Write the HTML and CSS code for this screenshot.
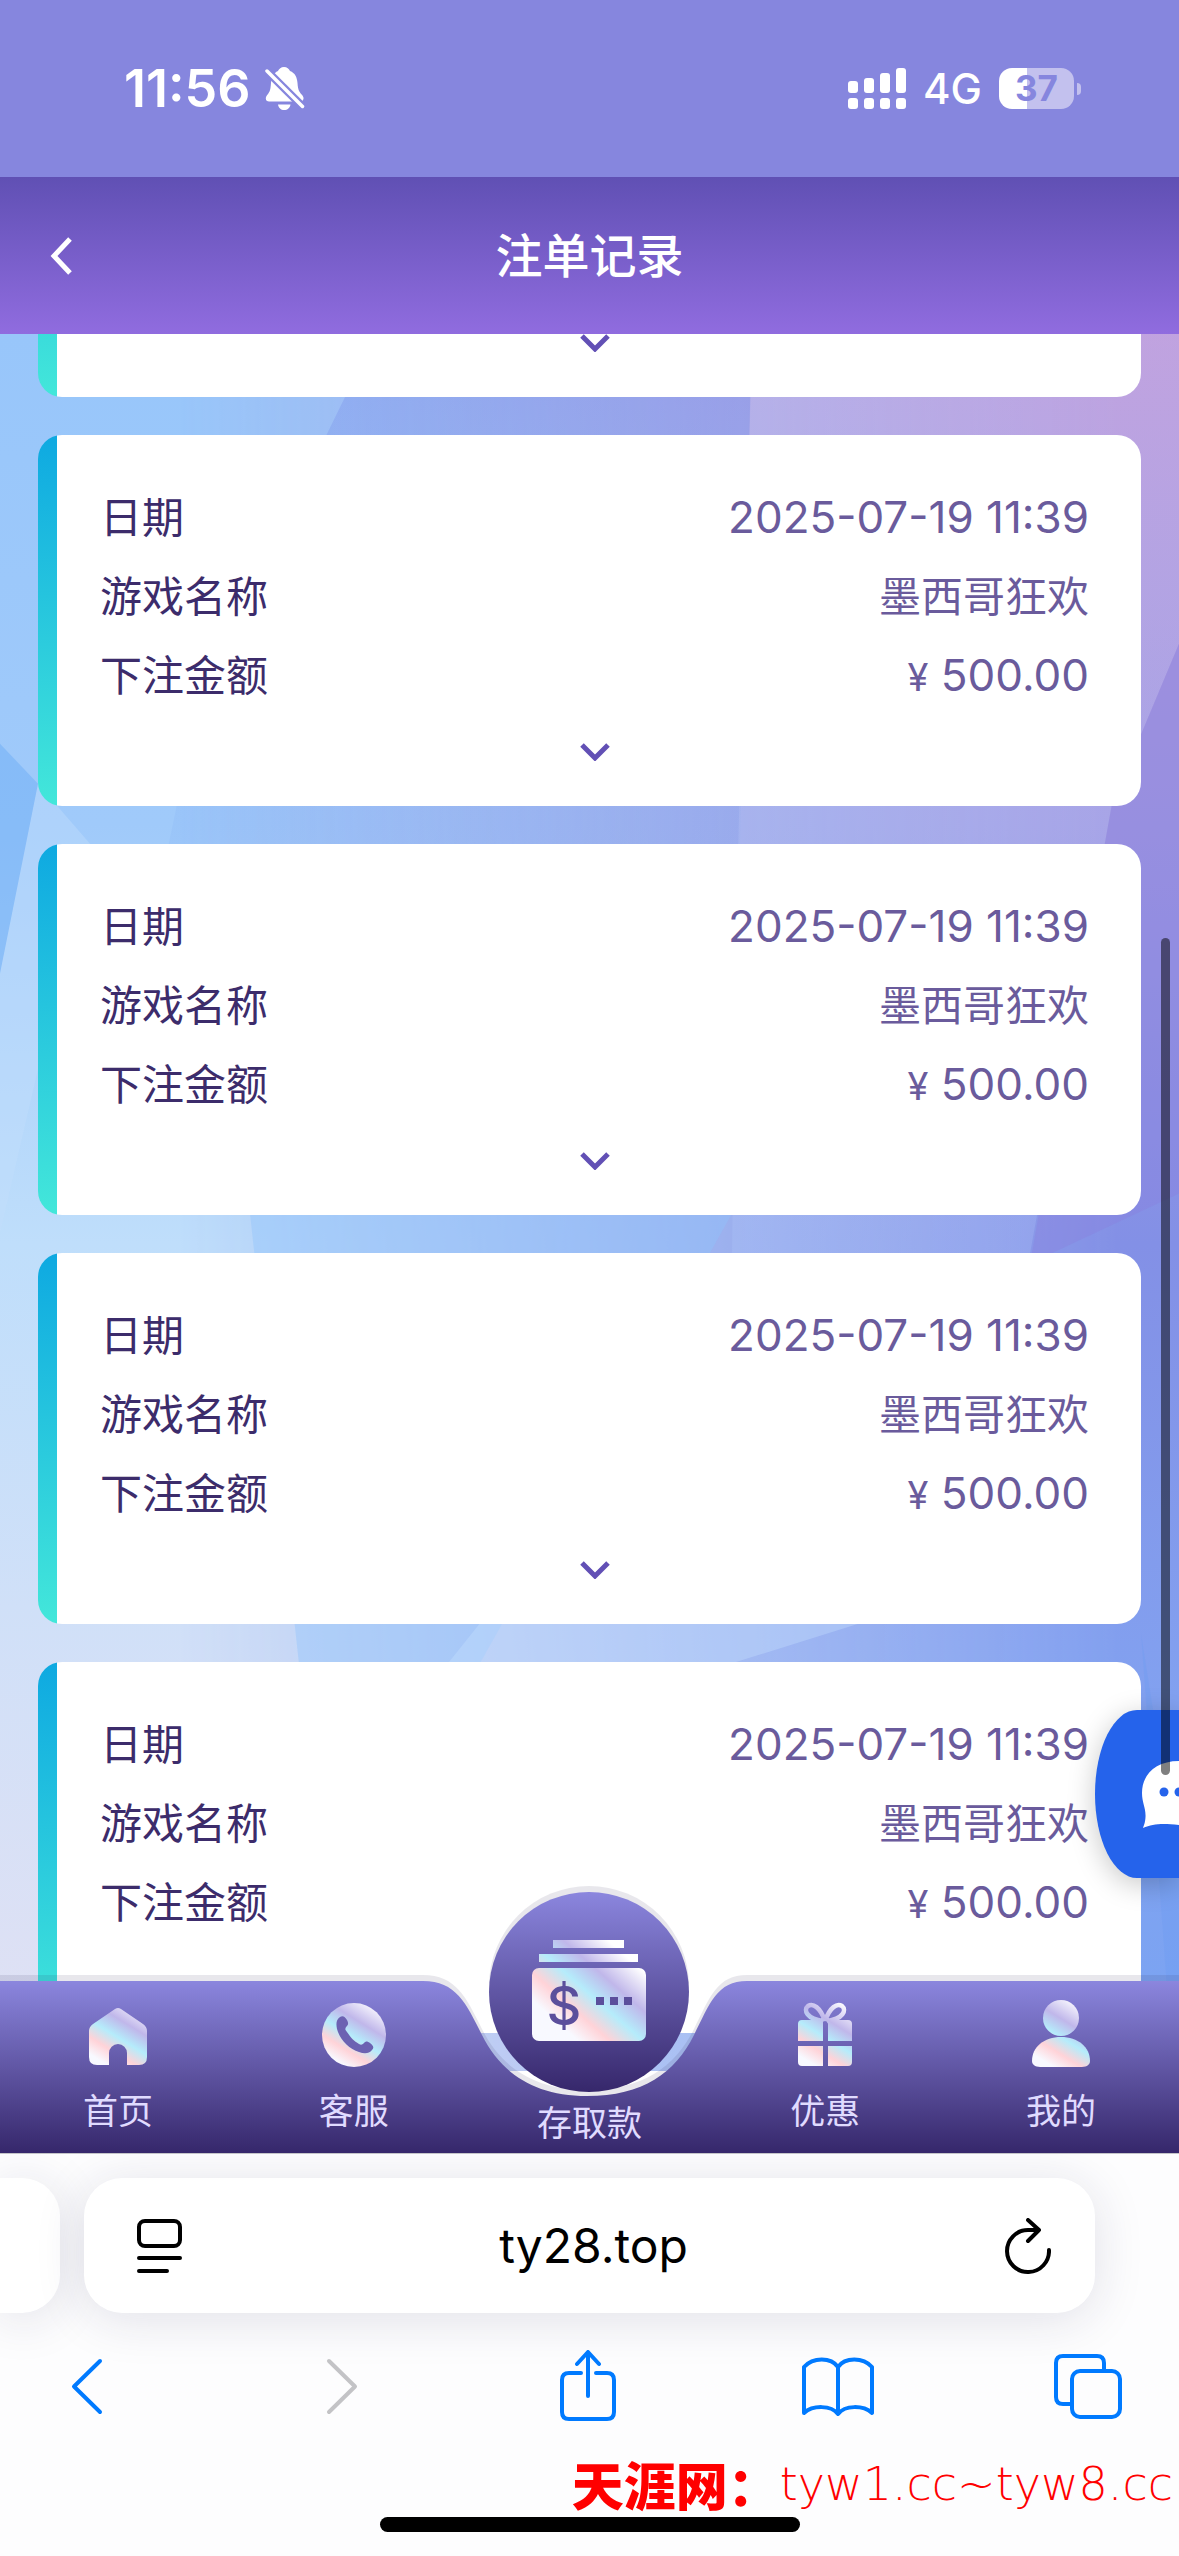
FILE: index.html
```html
<!DOCTYPE html>
<html lang="zh-CN">
<head>
<meta charset="utf-8">
<meta name="viewport" content="width=device-width, initial-scale=1">
<title>注单记录</title>
<link rel="stylesheet" href="styles.css">
</head>
<body>
<div class="status">
  <div class="status-group">
    <span class="clock">11:56</span>
    <svg class="bell" viewBox="0 0 40 44" aria-hidden="true">
      <path d="M19 0c3 0 5 2 6 4 5 2 7 6 7.500 12 .5 8 2 9 5 12.500 1 1.500 1.500 3 .5 4.500-.5 1-1.500 1.500-3 1.500H4c-3 0-4-3-2.500-5.500C4 25.500 5.500 24.500 6 16 6.500 10 8.500 6 13 4c1-2 3-4 6-4z" fill="#fff"/>
      <path d="M13 37.500h12.500c-.5 3.500-3 5.500-6.300 5.500s-5.700-2-6.200-5.500z" fill="#fff"/>
      <path d="M2 4L37.500 39.500" stroke="#8686de" stroke-width="8"/>
      <path d="M2 4L37.500 39.500" stroke="#fff" stroke-width="3.500" stroke-linecap="round"/>
    </svg>
  </div>
  <div class="status-group">
    <svg class="signal" viewBox="0 0 58 41" fill="#fff" aria-hidden="true">
      <rect y="13" width="10" height="12" rx="3"/><rect x="16" y="10" width="10" height="15" rx="3"/><rect x="32" y="5" width="10" height="20" rx="3"/><rect x="48" width="10" height="25" rx="3"/>
      <rect y="30" width="10" height="11" rx="3"/><rect x="16" y="30" width="10" height="11" rx="3"/><rect x="32" y="30" width="10" height="11" rx="3"/><rect x="48" y="30" width="10" height="11" rx="3"/>
    </svg>
    <span class="network">4G</span>
    <span class="battery"><span class="battery-body">37</span><span class="battery-tip"></span></span>
  </div>
</div>

<header class="header">
  <button class="back" type="button" aria-label="返回">
    <svg viewBox="0 0 22 38" fill="none" stroke="#fff" stroke-width="5"><path d="M20 2L4 19l16 17"/></svg>
  </button>
  <h1 class="title">注单记录</h1>
</header>

<main class="screen">
  <svg class="backdrop" viewBox="0 0 1179 1820" preserveAspectRatio="none" aria-hidden="true">
    <defs>
      <linearGradient id="bgLeft" x1="0" y1="0" x2="0" y2="1">
        <stop offset="0" stop-color="#98c6fa"/><stop offset=".27" stop-color="#a0cafa"/><stop offset=".5" stop-color="#bfdefb"/><stop offset=".7" stop-color="#d0e0f8"/><stop offset="1" stop-color="#e4e1f3"/>
      </linearGradient>
      <linearGradient id="bgRight" x1="0" y1="0" x2="0" y2="1">
        <stop offset="0" stop-color="#b698dc"/><stop offset=".27" stop-color="#9f98e2"/><stop offset=".5" stop-color="#8390e6"/><stop offset=".75" stop-color="#82a1f0"/><stop offset="1" stop-color="#78a5f3"/>
      </linearGradient>
      <linearGradient id="fade"><stop offset=".15" stop-color="#000"/><stop offset=".95" stop-color="#fff"/></linearGradient>
      <mask id="fadeMask"><rect width="1179" height="1820" fill="url(#fade)"/></mask>
      <linearGradient id="shade" x1="0" y1="0" x2="0" y2="1"><stop offset="0" stop-color="#6f7fe6" stop-opacity=".3"/><stop offset=".8" stop-color="#6f9ff0" stop-opacity=".12"/></linearGradient>
      <linearGradient id="tint" x1="0" y1="0" x2="0" y2="1"><stop offset="0" stop-color="#dfc3ea" stop-opacity=".25"/><stop offset=".5" stop-color="#c0c8f5" stop-opacity=".25"/><stop offset="1" stop-color="#b0c8fa" stop-opacity=".25"/></linearGradient>
    </defs>
    <rect width="1179" height="1820" fill="url(#bgLeft)"/>
    <rect width="1179" height="1820" fill="url(#bgRight)" mask="url(#fadeMask)"/>
    <path d="M345 63L200 360L150 600H738L752 0H420z" fill="url(#shade)"/>
    <path d="M752 0L738 520L732 920L1030 920L1112 470L1179 310V0z" fill="url(#tint)"/>
    <path d="M1179 310L1112 470L1030 930L1179 860z" fill="#8a7fdc" opacity=".35"/>
    <path d="M0 410L38 450L0 640z" fill="#6eadf6" opacity=".5"/>
    <path d="M38 450L90 510L0 900V640z" fill="#c4dffc" opacity=".4"/>
    <path d="M250 880L732 880L480 1330L300 1340z" fill="#8fc2fc" opacity=".4"/>
    <path d="M480 1290H860L700 1340H440z" fill="#c8e2ff" opacity=".35"/>
    <path d="M1141 1300L1179 1820V1540z" fill="#699bf2" opacity=".3"/>
  </svg>

  <section class="list">
    <article class="card card-tail">
      <button class="expand" type="button" aria-label="展开"><svg viewBox="0 0 30 18"><path d="M2 2L15 15L28 2"/></svg></button>
    </article>
    <article class="card">
      <dl class="rows">
        <div class="row"><dt>日期</dt><dd class="figure">2025-07-19 11:39</dd></div>
        <div class="row"><dt>游戏名称</dt><dd>墨西哥狂欢</dd></div>
        <div class="row"><dt>下注金额</dt><dd class="figure"><span class="yen">¥</span> 500.00</dd></div>
      </dl>
      <button class="expand" type="button" aria-label="展开"><svg viewBox="0 0 30 18"><path d="M2 2L15 15L28 2"/></svg></button>
    </article>
    <article class="card">
      <dl class="rows">
        <div class="row"><dt>日期</dt><dd class="figure">2025-07-19 11:39</dd></div>
        <div class="row"><dt>游戏名称</dt><dd>墨西哥狂欢</dd></div>
        <div class="row"><dt>下注金额</dt><dd class="figure"><span class="yen">¥</span> 500.00</dd></div>
      </dl>
      <button class="expand" type="button" aria-label="展开"><svg viewBox="0 0 30 18"><path d="M2 2L15 15L28 2"/></svg></button>
    </article>
    <article class="card">
      <dl class="rows">
        <div class="row"><dt>日期</dt><dd class="figure">2025-07-19 11:39</dd></div>
        <div class="row"><dt>游戏名称</dt><dd>墨西哥狂欢</dd></div>
        <div class="row"><dt>下注金额</dt><dd class="figure"><span class="yen">¥</span> 500.00</dd></div>
      </dl>
      <button class="expand" type="button" aria-label="展开"><svg viewBox="0 0 30 18"><path d="M2 2L15 15L28 2"/></svg></button>
    </article>
    <article class="card">
      <dl class="rows">
        <div class="row"><dt>日期</dt><dd class="figure">2025-07-19 11:39</dd></div>
        <div class="row"><dt>游戏名称</dt><dd>墨西哥狂欢</dd></div>
        <div class="row"><dt>下注金额</dt><dd class="figure"><span class="yen">¥</span> 500.00</dd></div>
      </dl>
      <button class="expand" type="button" aria-label="展开"><svg viewBox="0 0 30 18"><path d="M2 2L15 15L28 2"/></svg></button>
    </article>
    <article class="card card-head"></article>
  </section>

  <button class="chat" type="button" aria-label="在线客服">
    <svg viewBox="0 0 84 168" aria-hidden="true">
      <path d="M84 51C60 51 47 65 47 83c0 10 4 15 3.500 24-.3 5-1 7-2.500 11 10-4 18-5 36-3z" fill="#fff"/>
      <circle cx="69" cy="82" r="4.500" fill="#2563eb"/><circle cx="84" cy="82" r="4.500" fill="#2563eb"/>
    </svg>
  </button>

  <nav class="tabbar">
    <div class="tabbar-shape">
      <span class="tabbar-side"></span>
      <svg class="tabbar-notch" viewBox="0 0 361 172" aria-hidden="true">
        <defs><linearGradient id="bar" x1="0" y1="0" x2="0" y2="1"><stop offset="0" stop-color="#8b86de"/><stop offset="1" stop-color="#36276b"/></linearGradient></defs>
        <path d="M0 0H14C47 0 57 22 73 54C92 92 125 115 178 115C234 115 266 92 285 54C301 22 308 0 338 0H361V172H0z" fill="url(#bar)"/>
      </svg>
      <span class="tabbar-side"></span>
    </div>
    <a class="tab" href="#home">
      <svg class="tab-icon" viewBox="0 0 64 68" aria-hidden="true">
        <defs><linearGradient id="holo" gradientUnits="userSpaceOnUse" x1="12" y1="66" x2="50" y2="4"><stop offset=".08" stop-color="#f8f9ff"/><stop offset=".28" stop-color="#ffd3d8"/><stop offset=".48" stop-color="#b5ecfb"/><stop offset=".7" stop-color="#c0b7ea"/><stop offset="1" stop-color="#fbfaff"/></linearGradient></defs>
        <path d="M29 9q3-2 6 0l22 15q4 3 4 7v26q0 8-8 8H41V53a9 9 0 0 0-18 0v12H11q-8 0-8-8V31q0-4 4-7z" fill="url(#holo)"/>
      </svg>
      <span>首页</span>
    </a>
    <a class="tab" href="#service">
      <svg class="tab-icon" viewBox="0 0 64 68" aria-hidden="true">
        <circle cx="32" cy="35" r="32" fill="url(#holo)"/>
        <path d="M18 17c3-2 5 0 7 3 2 4 1 5-1 7-1 2-1 3 1 5 4 6 7 9 12 12 2 1 3 1 5-1 2-2 3-2 6 0 4 3 4 5 2 7-3 4-8 4-13 2C27 49 18 40 15 29c-1-5-1-9 3-12z" fill="#6c62b2"/>
      </svg>
      <span>客服</span>
    </a>
    <a class="tab tab-main" href="#cashier">
      <svg class="coin" viewBox="0 0 200 200" aria-hidden="true">
        <defs><linearGradient id="holoWide" gradientUnits="userSpaceOnUse" x1="64" y1="138" x2="136" y2="56"><stop offset=".08" stop-color="#f8f9ff"/><stop offset=".27" stop-color="#ffd3d8"/><stop offset=".47" stop-color="#b5ecfb"/><stop offset=".68" stop-color="#c0b7ea"/><stop offset=".95" stop-color="#fff"/></linearGradient></defs>
        <circle cx="100" cy="100" r="100" fill="url(#bar)"/>
        <path d="M64 48h71v8H64zM50 62h99v8H50z" fill="url(#holoWide)"/>
        <rect x="43" y="76" width="114" height="73" rx="7" fill="url(#holoWide)"/>
        <text class="coin-sign" x="75" y="133" text-anchor="middle">$</text>
        <path d="M107 105h8v8h-8zM121 105h8v8h-8zM135 105h8v8h-8z" fill="#5b4f9c"/>
      </svg>
      <span>存取款</span>
    </a>
    <a class="tab" href="#offers">
      <svg class="tab-icon" viewBox="0 0 64 68" aria-hidden="true">
        <path d="M32 21C27 7 20 3 15 6c-5 4-1 13 15 15M32 21C37 7 44 3 49 6c5 4 1 13-15 15" fill="none" stroke="url(#holo)" stroke-width="4.500"/>
        <path d="M9 20h21v21H5V24q0-4 4-4zM35 20h20q4 0 4 4v17H35zM5 46h25v20H9q-4 0-4-4zM35 46h24v16q0 4-4 4H35z" fill="url(#holo)"/>
      </svg>
      <span>优惠</span>
    </a>
    <a class="tab" href="#me">
      <svg class="tab-icon" viewBox="0 0 64 68" aria-hidden="true">
        <circle cx="32" cy="18" r="18" fill="url(#holo)"/>
        <path d="M32 37c17 0 29 10 29 24 0 5-5 6-10 6H13C8 67 3 66 3 61 3 47 15 37 32 37z" fill="url(#holo)"/>
      </svg>
      <span>我的</span>
    </a>
  </nav>
  <span class="scrollbar"></span>
</main>

<footer class="browser">
  <div class="tabs-strip">
    <div class="page-card page-card-prev"></div>
    <div class="page-card address">
      <button class="icon-button" type="button" aria-label="页面菜单">
        <svg class="glyph-small" viewBox="0 0 46 56" fill="none" stroke="#000" stroke-width="4" stroke-linecap="round"><rect x="3" y="3" width="41" height="25" rx="6"/><path d="M3 40h41M3 53h28"/></svg>
      </button>
      <span class="url">ty28.top</span>
      <button class="icon-button" type="button" aria-label="刷新">
        <svg class="glyph-small" viewBox="0 0 46 56" fill="none" stroke="#000" stroke-width="4" stroke-linecap="round" stroke-linejoin="round"><path d="M44 32A21 21 0 1 1 23 12H34M23 2l11 10-11 11"/></svg>
      </button>
    </div>
  </div>
  <div class="toolbar">
    <button class="tool" type="button" aria-label="后退"><svg viewBox="0 0 80 72"><path d="M53 11L27 36.500L53 62"/></svg></button>
    <button class="tool tool-off" type="button" aria-label="前进"><svg viewBox="0 0 80 72"><path d="M32 11L58 36.500L32 62"/></svg></button>
    <button class="tool" type="button" aria-label="分享"><svg viewBox="0 0 80 72"><path d="M33 23H21q-7 0-7 7v32q0 7 7 7h38q7 0 7-7V30q0-7-7-7H48M40 46V3M29 14L40 2l11 12"/></svg></button>
    <button class="tool" type="button" aria-label="书签"><svg viewBox="0 0 80 72"><path d="M40 17C33 7 15 7 6 17v46c9-8 27-8 34 1 7-9 25-9 34-1V17c-9-10-27-10-34 0zM40 17v46"/></svg></button>
    <button class="tool" type="button" aria-label="标签页"><svg viewBox="0 0 80 72"><path d="M22 54h-7q-7 0-7-7V13q0-7 7-7h34q7 0 7 7v7"/><rect x="24" y="21" width="48" height="46" rx="8"/></svg></button>
  </div>
  <p class="site-mark"><strong>天涯网：</strong>tyw1.cc~tyw8.cc</p>
  <span class="home-bar"></span>
</footer>
</body>
</html>
```

FILE: styles.css
```css
* {
  box-sizing: border-box;
}

body {
  margin: 0;
  min-height: 100vh;
  display: flex;
  flex-direction: column;
  background: #fdfdfe;
  font-family: Inter, "Noto Sans CJK SC", sans-serif;
}

button {
  padding: 0;
  border: 0;
  background: none;
}

svg {
  display: block;
}

/* Status bar */

.status {
  display: flex;
  justify-content: space-between;
  align-items: center;
  height: 177px;
  padding: 0 98px 0 124px;
  background: #8686de;
  color: #fff;
}

.status-group {
  display: flex;
  align-items: center;
  gap: 17px;
}

.status-group:first-child {
  gap: 14px;
}

.clock {
  font-size: 52px;
  line-height: 60px;
  font-weight: 600;
}

.bell {
  width: 40px;
  height: 44px;
}

.signal {
  width: 58px;
  height: 41px;
}

.network {
  font-size: 42px;
  line-height: 48px;
  font-weight: 500;
}

.battery {
  display: flex;
  align-items: center;
  gap: 3px;
}

.battery-body {
  width: 75px;
  height: 41px;
  border-radius: 13px;
  background: linear-gradient(to right, #fff 28px, #c3c1ee 28px);
  color: #8686de;
  font-size: 35px;
  line-height: 41px;
  font-weight: 700;
  text-align: center;
}

.battery-tip {
  width: 4px;
  height: 12px;
  border-radius: 0 4px 4px 0;
  background: #c3c1ee;
}

/* Page header */

.header {
  display: grid;
  grid-template-columns: 1fr auto 1fr;
  align-items: center;
  height: 157px;
  padding: 0 50px;
  background: linear-gradient(#6050b4, #906cdf);
}

.back svg {
  width: 22px;
  height: 38px;
}

.title {
  margin: 0;
  color: #fff;
  font-size: 47px;
  line-height: 60px;
  font-weight: 500;
}

/* Bet records */

.screen {
  position: relative;
  flex: 1;
  overflow: hidden;
}

.backdrop {
  position: absolute;
  inset: 0;
  width: 100%;
  height: 100%;
}

.list {
  position: relative;
  display: flex;
  flex-direction: column;
  gap: 38px;
  padding: 0 38px;
}

.card {
  display: flex;
  flex-direction: column;
  align-items: center;
  gap: 28px;
  padding: 43px 52px 45px 62px;
  border-radius: 24px;
  background: linear-gradient(#0ea9e1, #43e7da) 0 0 / 19px 100% no-repeat, #fff;
}

.card-tail {
  padding-top: 0;
  border-radius: 0 0 24px 24px;
  background: linear-gradient(#3adcdb, #43e7da) 0 0 / 19px 100% no-repeat, #fff;
}

.card-head {
  height: 82px;
  padding: 0;
  border-radius: 24px 24px 0 0;
}

.rows {
  width: 100%;
  margin: 0;
}

.row {
  display: flex;
  justify-content: space-between;
  height: 79px;
  font-size: 42px;
  line-height: 79px;
}

.row dt {
  color: #3c2c6b;
}

.row dd {
  margin: 0;
  color: #6a5b9c;
}

.row .figure {
  font-size: 44px;
}

.yen {
  font-size: 38px;
  line-height: 1;
}

.expand {
  height: 18px;
}

.expand svg {
  width: 30px;
  height: 18px;
  fill: none;
  stroke: #6250b5;
  stroke-width: 5px;
}

.scrollbar {
  position: absolute;
  top: 604px;
  right: 9px;
  width: 9px;
  height: 46%;
  border-radius: 5px;
  background: rgba(0, 0, 0, 0.5);
}

.chat {
  position: absolute;
  right: 0;
  bottom: 275px;
  width: 84px;
  height: 168px;
  border-radius: 42px 0 0 42px / 84px 0 0 84px;
  background: #2563eb;
  box-shadow: 0 6px 28px rgba(0, 0, 0, 0.22);
}

/* Bottom tabs */

.tabbar {
  position: absolute;
  inset: auto 0 0;
  display: grid;
  grid-template-columns: repeat(5, 1fr);
  height: 172px;
}

.tabbar-shape {
  position: absolute;
  inset: 0;
  display: flex;
  filter: drop-shadow(0 -6px 0 rgba(50, 40, 80, 0.11));
}

.tabbar-side {
  flex: 1;
  background: linear-gradient(#8b86de, #36276b);
}

.tabbar-notch {
  width: 361px;
  height: 172px;
}

.tab {
  position: relative;
  display: flex;
  flex-direction: column;
  align-items: center;
  gap: 21px;
  padding-top: 19px;
  color: #e0dbff;
  font-size: 35px;
  line-height: 44px;
  text-decoration: none;
}

.tab-icon {
  width: 64px;
  height: 68px;
}

.tab-main {
  justify-content: flex-end;
  padding-bottom: 8px;
}

.coin {
  position: absolute;
  top: -89px;
  width: 200px;
  height: 200px;
  filter: drop-shadow(0 -6px 0 rgba(50, 40, 80, 0.11));
}

.coin-sign {
  fill: #5b4f9c;
  font-size: 54px;
  font-weight: 500;
}

/* Browser chrome */

.browser {
  display: flex;
  flex-direction: column;
  height: 403px;
  border-top: 1px solid #c4c4c9;
  overflow: hidden;
}

.tabs-strip {
  display: flex;
  gap: 24px;
  padding: 24px 84px 0 0;
}

.page-card {
  height: 135px;
  border-radius: 38px;
  background: #fff;
  box-shadow: 0 6px 50px rgba(30, 30, 80, 0.13);
}

.page-card-prev {
  width: 60px;
  border-radius: 0 38px 38px 0;
}

.address {
  flex: 1;
  display: flex;
  align-items: center;
  justify-content: space-between;
  padding: 0 44px 0 52px;
}

.url {
  color: #000;
  font-size: 48px;
  line-height: 60px;
}

.glyph-small {
  width: 46px;
  height: 56px;
}

.toolbar {
  display: flex;
  justify-content: space-between;
  padding: 37px 51px 0 47px;
}

.tool svg {
  width: 80px;
  height: 72px;
  fill: none;
  stroke: #007aff;
  stroke-width: 4px;
  stroke-linecap: round;
  stroke-linejoin: round;
}

.tool-off svg {
  stroke: #c3c3c6;
}

.site-mark {
  display: flex;
  align-items: center;
  justify-content: flex-end;
  margin: 34px 6px 5px 0;
  color: #f00;
  font-family: "DejaVu Sans", "Noto Sans CJK SC", sans-serif;
  font-size: 46px;
  line-height: 56px;
  font-weight: 200;
}

.site-mark strong {
  font-family: "Noto Sans CJK SC", sans-serif;
  font-size: 52px;
  font-weight: 900;
}

.home-bar {
  align-self: center;
  width: 420px;
  height: 15px;
  border-radius: 8px;
  background: #000;
}
```
